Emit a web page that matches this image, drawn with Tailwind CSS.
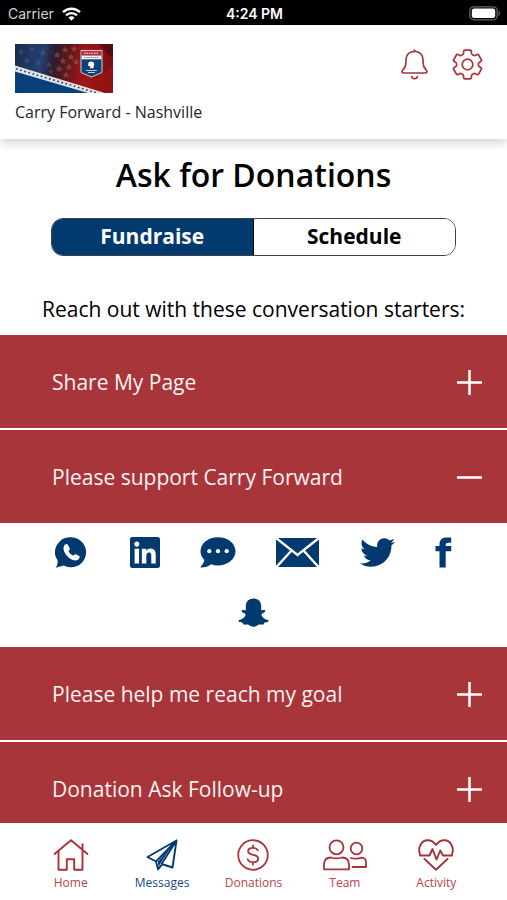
<!DOCTYPE html>
<html lang="en">
<head>
    <meta charset="UTF-8">
    <meta name="viewport" content="width=device-width, initial-scale=1.0">
    <title>Ask for Donations</title>
    <script src="https://cdn.jsdelivr.net/npm/@tailwindcss/browser@4"></script>
</head>
<body class="h-screen flex flex-col bg-white text-black font-['Open_Sans',sans-serif]">

    <!-- Status bar -->
    <div class="grid grid-cols-3 items-center shrink-0 h-[25px] pl-2 pr-1.5 bg-black text-white text-sm leading-5 font-[Inter,sans-serif]">
        <div class="flex items-center gap-2 pt-0.5 text-gray-300">
            <span>Carrier</span>
            <svg class="w-[19px] h-[14px]" viewBox="0 0 19 14" fill="none" stroke="#fff" stroke-width="2.4">
                <path d="M1 5.2a12.2 12.2 0 0 1 17 0M4 8.3a8 8 0 0 1 11 0"/>
                <path d="M6.4 10.6a4.5 4.5 0 0 1 6.2 0L9.5 13.8z" fill="#fff" stroke="none"/>
            </svg>
        </div>
        <div class="pt-0.5 text-center font-semibold">4:24 PM</div>
        <div class="flex justify-end pt-0.5">
            <svg class="w-[32px] h-[15px]" viewBox="0 0 32 15">
                <rect x="0.8" y="0.8" width="27.4" height="13" rx="4" fill="none" stroke="#666" stroke-width="1.3"/>
                <rect x="2.8" y="2.5" width="23.4" height="9.6" rx="2.3" fill="#fff"/>
                <path d="M29.5 5v5c2-1 2-4 0-5z" fill="#666"/>
            </svg>
        </div>
    </div>

    <!-- Header -->
    <header class="relative z-10 flex justify-between items-start shrink-0 h-[114px] pl-[15px] pr-6 pt-[19px] bg-white shadow-[0_3px_10px_rgba(0,0,0,0.2)]">
        <div>
            <svg class="w-[98px] h-[49px]" viewBox="0 0 98 49" role="img" aria-label="Carry Forward">
                <defs>
                    <linearGradient id="flag" x1="0" x2="1" y1="0" y2="0.1">
                        <stop offset="0" stop-color="#182b4e"/>
                        <stop offset="0.3" stop-color="#24406f"/>
                        <stop offset="0.42" stop-color="#2a1c2c"/>
                        <stop offset="0.56" stop-color="#5c1719"/>
                        <stop offset="0.72" stop-color="#9a1517"/>
                        <stop offset="1" stop-color="#7b1012"/>
                    </linearGradient>
                    <path id="star" d="M0-4 1-1.2 3.8-1.2 1.5.5 2.4 3.2 0 1.6-2.4 3.2-1.5.5-3.8-1.2-1-1.2z"/>
                </defs>
                <rect width="98" height="49" fill="url(#flag)"/>
                <g fill="#7189ad" opacity="0.25">
                    <use href="#star" x="6" y="8"/><use href="#star" x="17" y="5"/><use href="#star" x="28" y="9"/>
                    <use href="#star" x="12" y="17"/><use href="#star" x="23" y="19"/><use href="#star" x="34" y="21"/>
                    <use href="#star" x="36" y="28"/>
                </g>
                <g fill="#a4655f" opacity="0.5">
                    <use href="#star" x="42" y="11"/><use href="#star" x="50" y="6"/><use href="#star" x="59" y="5"/>
                    <use href="#star" x="48" y="17"/><use href="#star" x="56" y="13"/><use href="#star" x="44" y="25"/>
                    <use href="#star" x="54" y="23"/><use href="#star" x="61" y="18"/><use href="#star" x="51" y="31"/>
                </g>
                <path d="M62 44 72 30 80 36 98 22V49H80z" fill="#b5191a" opacity="0.4"/>
                <path d="M84 0 98 0V14L92 10z" fill="#3d090b" opacity="0.6"/>
                <path d="M0 24 80 49H0z" fill="#07417a"/>
                <path d="M0 21.5 90 49H73L0 27.5z" fill="#dfe3e8"/>
                <path d="M1 24.8 84 49.6" stroke="#36435c" stroke-width="1.7" stroke-dasharray="1.7 2.6"/>
                <path d="M66 6.5H87V28.5L76.5 33 66 28.5z" fill="#124074" stroke="#c9d1dc" stroke-width="1"/>
                <path d="M66.7 7H86.3V11.2H66.7z" fill="#d21f2b"/>
                <path d="M66.7 11.5H86.3V15.3H66.7z" fill="#f3f4f7"/>
                <path d="M69 9.2H84" stroke="#f1b3b5" stroke-width="1.5" stroke-dasharray="1.6 0.9"/>
                <path d="M69 13.5H84" stroke="#71819d" stroke-width="1.2" stroke-dasharray="1.4 0.8"/>
                <path d="M73.5 18.5c2-1.7 5.3-1 5.7 1.3.3 1.6-.7 2.6-.7 4.5h-3.6l.5-2-2.3-.4z" fill="#fff"/>
                <path d="M71 26.5h11M73 28.5h7" stroke="#b8c6d8" stroke-width="1"/>
            </svg>
            <p class="mt-2 text-base leading-[22px] text-neutral-800">Carry Forward - Nashville</p>
        </div>
        <div class="flex gap-6 pt-[5px]">
            <button type="button" aria-label="Notifications">
                <svg class="w-[27px] h-[31px]" viewBox="0 0 27 31" fill="none" stroke="#a83339" stroke-width="1.7" stroke-linecap="round" stroke-linejoin="round">
                    <path d="M13.5 1v1.3M13.5 2.3C8.5 2.3 5.2 5.8 5 11c-.2 6-.6 7-3.2 10-1.4 1.7-.8 3 .9 3h21.6c1.7 0 2.3-1.3.9-3-2.6-3-3-4-3.2-10-.2-5.2-3.5-8.7-8.5-8.7z"/>
                    <path d="M10.7 27.5c.3 3 5.3 3 5.6 0"/>
                </svg>
            </button>
            <button type="button" aria-label="Settings">
                <svg class="w-[31px] h-[31px]" viewBox="0 0 31 31" fill="none" stroke="#a83339" stroke-width="1.7" stroke-linejoin="round">
                    <path d="M13 1.2H18Q19.3 1.2 19.4 2.3V4Q19.5 5.2 20.6 5.8L21.4 6.3Q22.5 6.9 23.6 6.3L25 5.5Q26 5 26.6 6L29.4 10.8Q29.9 11.7 29 12.3L27.5 13.3Q26.4 13.9 26.4 15V16Q26.400 17.100 27.500 17.700L29 18.700Q29.900 19.300 29.400 20.200L26.600 25Q26 26 25 25.500L23.600 24.700Q22.500 24.100 21.400 24.700L20.600 25.200Q19.500 25.800 19.400 27V28.700Q19.300 29.800 18 29.800H13Q11.700 29.800 11.600 28.700V27Q11.500 25.800 10.400 25.200L9.600 24.700Q8.500 24.100 7.400 24.700L6 25.500Q5 26 4.400 25L1.600 20.200Q1.100 19.300 2 18.700L3.500 17.700Q4.600 17.100 4.600 16V15Q4.600 13.900 3.500 13.300L2 12.300Q1.100 11.700 1.600 10.800L4.400 6Q5 5 6 5.500L7.400 6.300Q8.500 6.900 9.600 6.300L10.400 5.800Q11.500 5.200 11.600 4V2.300Q11.700 1.200 13 1.200z"/>
                    <circle cx="15.5" cy="15.5" r="5.3"/>
                </svg>
            </button>
        </div>
    </header>

    <!-- Content -->
    <main class="flex-1 min-h-0 overflow-y-auto [scrollbar-width:none]">
        <h1 class="pt-3.5 text-center text-[32px] leading-[44px] font-semibold">Ask for Donations</h1>

        <div class="grid grid-cols-2 h-[38px] mx-[51px] mt-[21px] border border-neutral-700 rounded-xl overflow-hidden text-[21px] font-bold">
            <button type="button" class="bg-[#023a70] text-white border-r border-black">Fundraise</button>
            <button type="button" class="bg-white">Schedule</button>
        </div>

        <p class="mt-[37px] mb-2.5 text-center text-[21px] leading-8">Reach out with these conversation starters:</p>

        <div class="flex flex-col gap-0.5 text-[21px] text-red-50">
            <button type="button" class="flex items-center justify-between h-[93px] shrink-0 pt-0.5 pl-[52px] pr-6 bg-[#a7353a]">
                Share My Page
                <svg class="w-[27px] h-[27px]" viewBox="0 0 27 27" stroke="#fff" stroke-width="2.5"><path d="M1 13.5h25M13.5 1v25"/></svg>
            </button>
            <div>
                <button type="button" aria-expanded="true" class="flex items-center justify-between w-full h-[93px] pt-0.5 pl-[52px] pr-6 bg-[#a7353a]">
                    Please support Carry Forward
                    <svg class="w-[27px] h-[27px]" viewBox="0 0 27 27" stroke="#fff" stroke-width="2.5"><path d="M1 13.5h25"/></svg>
                </button>
                <!-- Share targets -->
                <div class="flex flex-wrap justify-center gap-x-10 gap-y-[30px] px-10 pt-3.5 pb-[18px] text-[#023a70]">
                    <a href="#" aria-label="WhatsApp">
                        <svg class="w-[35px] h-[31px]" viewBox="0 0 35 31" fill="currentColor">
                            <path d="M16.5.3A15 15 0 1 1 8.8 28.4L.6 30.8c1.700-2.300 2.200-4.600 2-7.200A15 15 0 0 1 16.5.3z"/>
                            <path d="M9 9c1-1.900 3.100-2.600 4-1l1.700 3.200c.6 1.200-1 2.200-1.100 3 .7 1.900 2.600 3.500 4.300 4.200 1 .2 2.100-1.700 3.300-1.100l2.900 1.700c1.500 1-.2 3.300-1.700 4C16.5 25.600 6.300 15.300 9 9z" fill="#fff"/>
                        </svg>
                    </a>
                    <a href="#" aria-label="LinkedIn">
                        <svg class="w-[30px] h-[31px]" viewBox="0 32 448 448" preserveAspectRatio="none" fill="currentColor">
                            <path d="M416 32H31.9C14.3 32 0 46.5 0 64.3v383.4C0 465.5 14.3 480 31.9 480H416c17.6 0 32-14.5 32-32.3V64.3c0-17.8-14.4-32.3-32-32.3zM135.4 416H69V202.2h66.5V416zm-33.2-243c-21.3 0-38.5-17.3-38.5-38.5S80.9 96 102.2 96c21.2 0 38.5 17.3 38.5 38.5 0 21.3-17.2 38.5-38.5 38.5zm282.1 243h-66.4V312c0-24.8-.5-56.7-34.5-56.7-34.6 0-39.9 27-39.9 54.9V416h-66.4V202.2h63.7v29.2h.9c8.9-16.8 30.6-34.5 62.9-34.5 67.2 0 79.7 44.3 79.7 101.9V416z"/>
                        </svg>
                    </a>
                    <a href="#" aria-label="Text message">
                        <svg class="w-[36px] h-[31px]" viewBox="0 0 36 31" fill="currentColor">
                            <path d="M18 .3c9.7 0 17.5 6.1 17.5 14S27.7 28.5 18 28.5c-2.5 0-4.9-.4-7-1.2-2.6 2.1-6 3.3-9.7 3.3-.8 0-1-.7-.5-1.2 1.9-1.9 3.3-4.2 3.5-6.4C2 20.6.5 17.6.5 14.3.5 6.4 8.3.3 18 .3z"/>
                            <g fill="#fff"><circle cx="9.3" cy="14.2" r="2.1"/><circle cx="18" cy="14.2" r="2.1"/><circle cx="26.7" cy="14.2" r="2.1"/></g>
                        </svg>
                    </a>
                    <a href="#" aria-label="Email">
                        <svg class="w-[44px] h-[31px]" viewBox="0 0 44 31">
                            <path d="M0 1h43v29H0z" fill="currentColor"/>
                            <path d="M0 1 21.5 18 43 1M0 30.5 15.5 13.5M43 30.5 27.5 13.5" fill="none" stroke="#fff" stroke-width="2.4"/>
                        </svg>
                    </a>
                    <a href="#" aria-label="Twitter">
                        <svg class="w-[35px] h-[31px]" viewBox="0 48 512 416" fill="currentColor">
                            <path d="M459.37 151.716c.325 4.548.325 9.097.325 13.645 0 138.72-105.583 298.558-298.558 298.558-59.452 0-114.68-17.219-161.137-47.106 8.447.974 16.568 1.299 25.34 1.299 49.055 0 94.213-16.568 130.274-44.832-46.132-.975-84.792-31.188-98.112-72.772 6.498.974 12.995 1.624 19.818 1.624 9.421 0 18.843-1.3 27.614-3.573-48.081-9.747-84.143-51.98-84.143-102.985v-1.299c13.969 7.797 30.214 12.67 47.431 13.319-28.264-18.843-46.781-51.005-46.781-87.391 0-19.492 5.197-37.36 14.294-52.954 51.655 63.675 129.3 105.258 216.365 109.807-1.624-7.797-2.599-15.918-2.599-24.04 0-57.828 46.782-104.934 104.934-104.934 30.213 0 57.502 12.67 76.67 33.137 23.715-4.548 46.456-13.32 66.599-25.34-7.798 24.366-24.366 44.833-46.132 57.827 21.117-2.273 41.584-8.122 60.426-16.243-14.292 20.791-32.161 39.308-52.628 54.253z"/>
                        </svg>
                    </a>
                    <a href="#" aria-label="Facebook">
                        <svg class="w-[17px] h-[31px]" viewBox="0 0 17 31" fill="currentColor">
                            <path d="M4.5 30.5V14.2H.5V9h4V7.5c0-4.8 2.6-7 7-7h4.7v5.300h-3c-1.800 0-2.500.7-2.500 2V9h5.500v5.200h-5.500v16.300z"/>
                        </svg>
                    </a>
                    <a href="#" aria-label="Snapchat">
                        <svg class="w-[31px] h-[29px]" viewBox="0 0 31 29" fill="currentColor">
                            <path d="M15.5.5c-4.600 0-7.700 3-7.700 7.500v3.900c-1 .6-2.300-.2-3.200 0-1.200.4-1.200 1.700-.2 2.400l2.700 1.500c.8.600.3 1.700-.3 2.700-1.300 2-3.200 3-5.700 3.500-1 .3-.7 1.400 0 1.800 1.200.7 2.700.6 3.500 1 .6.500.3 1.600 1.200 1.800 1.200.2 3-.5 4.700.2 1.600.8 2.800 2 5 2s3.400-1.200 5-2c1.700-.7 3.500 0 4.700-.2.900-.2.600-1.300 1.200-1.800.8-.4 2.300-.3 3.500-1 .7-.4 1-1.500 0-1.800-2.500-.5-4.400-1.500-5.700-3.500-.6-1-1.100-2.100-.3-2.700l2.700-1.500c1-.7 1-2-.2-2.400-.9-.2-2.200.6-3.200 0V8c0-4.500-3.100-7.500-7.700-7.500z"/>
                        </svg>
                    </a>
                </div>
            </div>
            <button type="button" class="flex items-center justify-between h-[93px] shrink-0 pt-0.5 pl-[52px] pr-6 bg-[#a7353a]">
                Please help me reach my goal
                <svg class="w-[27px] h-[27px]" viewBox="0 0 27 27" stroke="#fff" stroke-width="2.5"><path d="M1 13.5h25M13.5 1v25"/></svg>
            </button>
            <button type="button" class="flex items-center justify-between h-[93px] shrink-0 pt-0.5 pl-[52px] pr-6 bg-[#a7353a]">
                Donation Ask Follow-up
                <svg class="w-[27px] h-[27px]" viewBox="0 0 27 27" stroke="#fff" stroke-width="2.5"><path d="M1 13.5h25M13.5 1v25"/></svg>
            </button>
        </div>
    </main>

    <!-- Bottom navigation -->
    <nav class="grid grid-cols-5 shrink-0 h-[77px] px-[25px] pt-4 bg-white text-[#b5444b] text-xs leading-4">
        <a href="#" class="flex flex-col items-center gap-1">
            <svg class="w-[36px] h-[32px]" viewBox="0 0 36 32" fill="none" stroke="#a83339" stroke-width="1.9" stroke-linecap="round" stroke-linejoin="round">
                <path d="M1.5 15 18 1.3 34.5 15M29.5 10.5V5.3M5.5 12v18.7h8.3V20.3h7.4v10.4h8.3V12"/>
            </svg>
            Home
        </a>
        <a href="#" aria-current="page" class="flex flex-col items-center gap-1 text-[#174a7e]">
            <svg class="w-[32px] h-[32px]" viewBox="0 0 32 32" fill="none" stroke="#023a70" stroke-width="1.9" stroke-linecap="round" stroke-linejoin="round">
                <path d="M30.5 1.5 1.5 18l8.5 4.5L30.5 1.5 26.5 28.5 15.5 25zM10 22.5l2 7.8 4-5"/>
                <path d="M26 6.5 11.8 22.8l.8 5.5 2-4.2z" fill="#023a70" stroke="none"/>
            </svg>
            Messages
        </a>
        <a href="#" class="flex flex-col items-center gap-1">
            <svg class="w-[32px] h-[32px]" viewBox="0 0 32 32" fill="none" stroke="#a83339" stroke-width="1.8" stroke-linecap="round">
                <circle cx="16" cy="16" r="14.8"/>
                <path d="M20.8 11.3c-.8-1.8-2.6-2.5-4.8-2.5-2.9 0-4.9 1.3-4.9 3.5 0 5 10.1 2 10.1 7.2 0 2.400-2.200 3.700-5.200 3.700-2.700 0-4.600-.9-5.300-2.900M16 6.5v2.3M16 23.2v2.4"/>
            </svg>
            Donations
        </a>
        <a href="#" class="flex flex-col items-center gap-1">
            <svg class="w-[44px] h-[32px]" viewBox="0 0 44 32" fill="none" stroke="#a83339" stroke-width="1.8" stroke-linecap="round" stroke-linejoin="round">
                <circle cx="13.5" cy="8.3" r="7"/>
                <circle cx="33.5" cy="9.5" r="5.8"/>
                <path d="M1 30.3v-4.500c0-4.500 2.500-7.300 7-7.300 3.700 1.200 7.300 1.200 11 0 4.500 0 7 2.800 7 7.300v4.500zM27.800 19c4 1 7.400.9 11-.3 2.900.1 4.200 2 4.200 5V28H29.500"/>
            </svg>
            Team
        </a>
        <a href="#" class="flex flex-col items-center gap-1">
            <svg class="w-[36px] h-[32px]" viewBox="0 0 36 32" fill="none" stroke="#a83339" stroke-width="1.9" stroke-linecap="round" stroke-linejoin="round">
                <path d="M2 15.5C-.5 8.5 3.5 1.3 9.5 1.3c3.500 0 6.500 1.700 8.500 4.700 2-3 5-4.700 8.500-4.700 6 0 10 7.200 7.500 14.200M6.5 20 18 30.700 29.500 20"/>
                <path d="M2 16.5h9.5l3-6.5 4 10.5 3.800-9 2.700 5H34"/>
            </svg>
            Activity
        </a>
    </nav>
</body>
</html>
